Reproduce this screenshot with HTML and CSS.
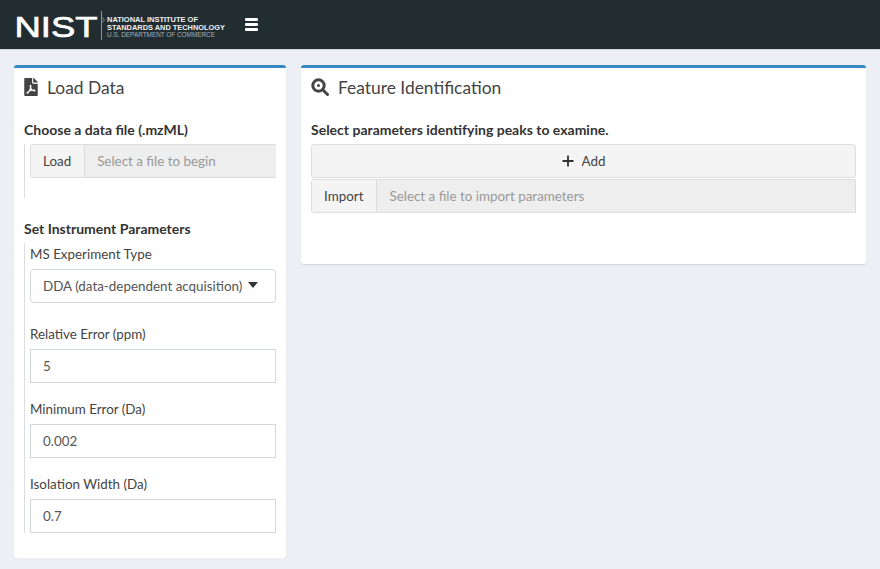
FILE: index.html
```html
<!DOCTYPE html>
<html>
<head>
  <meta charset="utf-8">
  <meta name="viewport" content="width=device-width">
  <title>Peak Review</title>
  <link rel="stylesheet" href="styles.css">
</head>
<body>
  <header class="topbar">
    <svg class="logo" width="216" height="33" viewBox="0 0 216 33">
      <text class="logo-mark" x="0.500" y="28.500" textLength="83" lengthAdjust="spacingAndGlyphs">NIST</text>
      <path d="M87.500 3v29M87.500 9l3 3-3 3" fill="none" stroke="#8a9296" stroke-width="1"/>
      <text class="logo-line" x="93" y="13.500" textLength="91" lengthAdjust="spacingAndGlyphs">NATIONAL INSTITUTE OF</text>
      <text class="logo-line" x="93" y="21.500" textLength="118" lengthAdjust="spacingAndGlyphs">STANDARDS AND TECHNOLOGY</text>
      <text class="logo-line dim" x="93" y="29" textLength="108" lengthAdjust="spacingAndGlyphs">U.S. DEPARTMENT OF COMMERCE</text>
    </svg>
    <div class="burger"><span></span><span></span><span></span></div>
  </header>

  <main class="content">
    <section class="card card-left">
      <h3 class="card-title">
        <svg class="icon" width="14" height="18" viewBox="0 0 384 512"><path fill="#444" d="M248 160h136v328c0 13.300-10.700 24-24 24H24c-13.300 0-24-10.700-24-24V24C0 10.700 10.700 0 24 0h200v136c0 13.200 10.800 24 24 24zm-8 171.800c-20-12.200-33.300-29-42.700-53.800 4.500-18.500 11.600-46.600 6.200-64.200-4.700-29.400-42.400-26.500-47.800-6.800-5 18.300-.4 44.100 8.100 77-11.600 27.600-28.700 64.600-40.800 85.800-.1 0-.1.1-.2.1-27.100 13.900-73.600 44.500-54.500 68 5.600 6.900 16 10 21.500 10 17.900 0 35.700-18 61.100-61.800 25.800-8.500 54.100-19.100 79-23.200 21.700 11.800 47.100 19.500 64 19.500 29.200 0 31.200-32 19.700-43.400-13.900-13.600-54.300-9.700-73.600-7.200zM377 105L279 7c-4.500-4.500-10.600-7-17-7h-6v128h128v-6.100c0-6.300-2.500-12.400-7-16.900z"/></svg>
        Load Data
      </h3>
      <div class="card-body">
        <p class="heading">Choose a data file (.mzML)</p>
        <div class="indent indent-file">
          <div class="file-group">
            <span class="file-btn">Load</span>
            <span class="file-name">Select a file to begin</span>
          </div>
        </div>

        <p class="heading heading-params">Set Instrument Parameters</p>
        <div class="indent indent-params">
          <label class="field-label">MS Experiment Type</label>
          <div class="select-box">DDA (data-dependent acquisition)<i class="caret"></i></div>
          <label class="field-label">Relative Error (ppm)</label>
          <div class="text-box">5</div>
          <label class="field-label">Minimum Error (Da)</label>
          <div class="text-box">0.002</div>
          <label class="field-label">Isolation Width (Da)</label>
          <div class="text-box">0.7</div>
        </div>
      </div>
    </section>

    <section class="card card-right">
      <h3 class="card-title">
        <svg class="icon" width="18" height="18" viewBox="0 0 18 18">
          <circle cx="7.500" cy="7.500" r="5.700" fill="none" stroke="#444" stroke-width="3"/>
          <circle cx="7.500" cy="7.500" r="1.500" fill="#444"/>
          <path d="M12 12l4.500 4.500" stroke="#444" stroke-width="3" stroke-linecap="round"/>
        </svg>
        Feature Identification
      </h3>
      <div class="card-body">
        <p class="heading">Select parameters identifying peaks to examine.</p>
        <div class="add-btn">
          <svg width="12" height="12" viewBox="0 0 12 12"><path d="M6 .5v11M.5 6h11" stroke="#333" stroke-width="1.800"/></svg>
          Add
        </div>
        <div class="file-group">
          <span class="file-btn">Import</span>
          <span class="file-name">Select a file to import parameters</span>
        </div>
      </div>
    </section>
  </main>
</body>
</html>
```

FILE: styles.css
```css
* {
  box-sizing: border-box;
}
body {
  margin: 0;
  background-color: #ecf0f5;
  font-family: "Lato", "Liberation Sans", sans-serif;
  font-size: 13.400px;
  color: #333;
}

.topbar {
  height: 50px;
  background-color: #222d32;
  display: flex;
  align-items: center;
  padding-left: 14px;
  border-bottom: 1px solid #d5d9dd;
}
.logo {
  display: block;
  overflow: visible;
}
.logo-mark {
  font-family: "Liberation Sans", sans-serif;
  font-size: 30px;
  fill: #fff;
  stroke: #fff;
  stroke-width: 0.700px;
}
.logo-line {
  font-family: "Liberation Sans", sans-serif;
  font-size: 7.500px;
  font-weight: bold;
  fill: #f0f0f0;
}
.logo-line.dim {
  font-weight: normal;
  fill: #a8afb2;
}
.burger {
  width: 13px;
  margin-left: 15px;
  display: flex;
  flex-direction: column;
  gap: 2.500px;
}
.burger span {
  height: 2.500px;
  border-radius: 1px;
  background-color: #fff;
}

.content {
  display: flex;
  align-items: flex-start;
  gap: 15px;
  padding: 15px 14px 0;
}
.card {
  background-color: #fff;
  border-top: 3px solid #3689c3;
  border-radius: 3px;
  box-shadow: 0 1px 1px rgba(0,0,0,0.1);
}
.card-left {
  width: 272px;
  height: 493px;
}
.card-right {
  flex: 1;
  height: 199px;
}
.card-title {
  margin: 0;
  height: 38px;
  padding: 0 10px;
  display: flex;
  align-items: center;
  gap: 9px;
  font-size: 17.400px;
  font-weight: normal;
  color: #444;
}
.icon {
  flex: none;
}
.card-body {
  padding: 15px 10px 0;
}
.heading {
  margin: 0 0 5px;
  height: 18px;
  line-height: 18px;
  font-size: 14px;
  font-weight: bold;
  color: #333;
}
.heading-params {
  margin-top: 22px;
}
.indent {
  border-left: 1px solid #ddd;
  padding-left: 5px;
}
.indent-file {
  height: 54px;
}
.indent-file .file-group {
  border-right: 0;
  border-radius: 3px 0 0 3px;
}
.indent-params {
  padding-top: 1px;
}

.file-group {
  display: flex;
  height: 34px;
  border: 1px solid #ddd;
  border-radius: 3px 0 0 3px;
  background-color: #eee;
}
.file-btn {
  padding: 0 13px 0 12px;
  line-height: 32px;
  background-color: #f4f4f4;
  border-right: 1px solid #ddd;
  color: #444;
}
.file-name {
  padding-left: 12px;
  line-height: 32px;
  color: #999;
}
.add-btn {
  height: 34px;
  margin-bottom: 1px;
  border: 1px solid #ddd;
  border-radius: 3px;
  background-color: #f4f4f4;
  display: flex;
  align-items: center;
  justify-content: center;
  gap: 8px;
  color: #444;
}

.field-label {
  display: block;
  height: 25px;
  line-height: 20px;
  color: #444;
}
.select-box,
.text-box {
  height: 34px;
  padding-left: 12px;
  line-height: 32px;
  border: 1px solid #d2d6de;
  color: #555;
}
.select-box {
  display: flex;
  align-items: center;
  justify-content: space-between;
  padding-right: 17px;
  border-radius: 4px;
  margin-bottom: 21px;
  white-space: nowrap;
}
.text-box {
  margin-bottom: 16px;
}
.text-box:last-child {
  margin-bottom: 0;
}
.caret {
  flex: none;
  width: 0;
  height: 0;
  margin-bottom: 3px;
  border-left: 5.500px solid transparent;
  border-right: 5.500px solid transparent;
  border-top: 6px solid #333;
}
```
